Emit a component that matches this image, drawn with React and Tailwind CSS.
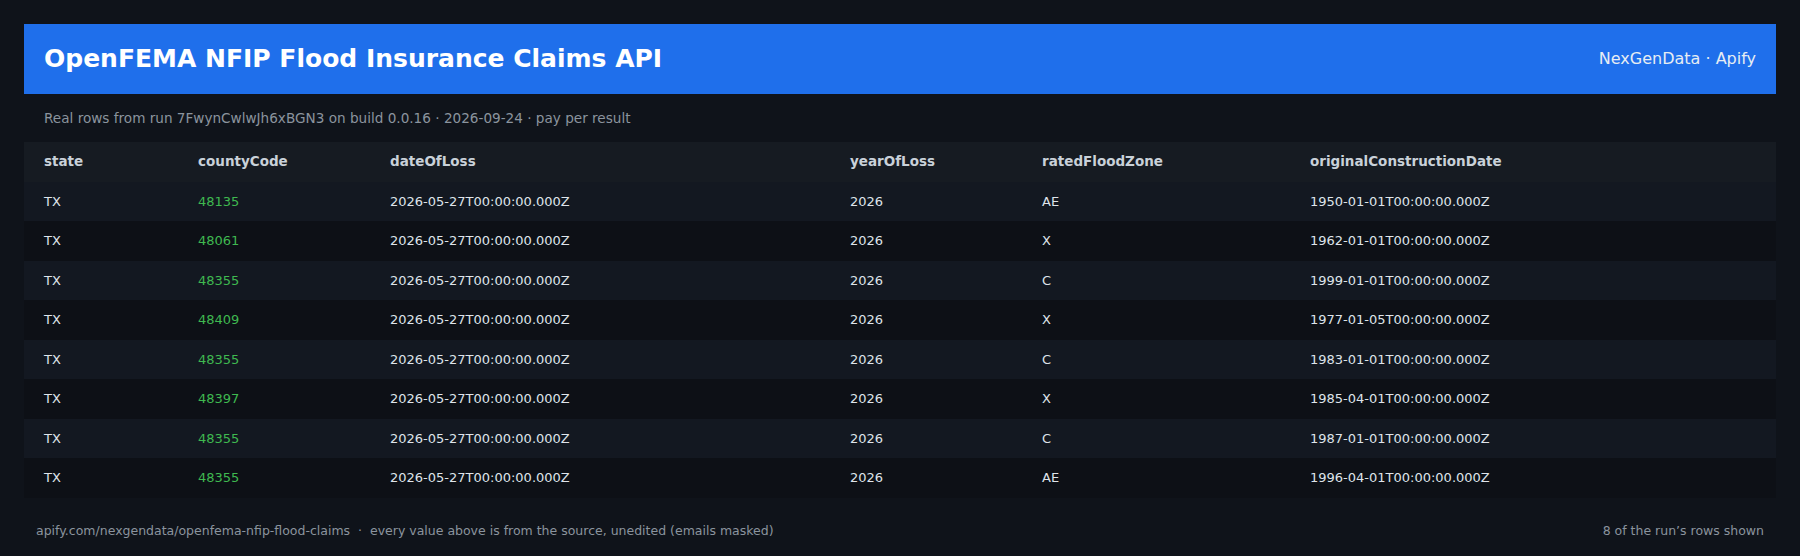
const rows = [
  { state: 'TX', countyCode: '48135', dateOfLoss: '2026-05-27T00:00:00.000Z', yearOfLoss: '2026', zone: 'AE', built: '1950-01-01T00:00:00.000Z' },
  { state: 'TX', countyCode: '48061', dateOfLoss: '2026-05-27T00:00:00.000Z', yearOfLoss: '2026', zone: 'X', built: '1962-01-01T00:00:00.000Z' },
  { state: 'TX', countyCode: '48355', dateOfLoss: '2026-05-27T00:00:00.000Z', yearOfLoss: '2026', zone: 'C', built: '1999-01-01T00:00:00.000Z' },
  { state: 'TX', countyCode: '48409', dateOfLoss: '2026-05-27T00:00:00.000Z', yearOfLoss: '2026', zone: 'X', built: '1977-01-05T00:00:00.000Z' },
  { state: 'TX', countyCode: '48355', dateOfLoss: '2026-05-27T00:00:00.000Z', yearOfLoss: '2026', zone: 'C', built: '1983-01-01T00:00:00.000Z' },
  { state: 'TX', countyCode: '48397', dateOfLoss: '2026-05-27T00:00:00.000Z', yearOfLoss: '2026', zone: 'X', built: '1985-04-01T00:00:00.000Z' },
  { state: 'TX', countyCode: '48355', dateOfLoss: '2026-05-27T00:00:00.000Z', yearOfLoss: '2026', zone: 'C', built: '1987-01-01T00:00:00.000Z' },
  { state: 'TX', countyCode: '48355', dateOfLoss: '2026-05-27T00:00:00.000Z', yearOfLoss: '2026', zone: 'AE', built: '1996-04-01T00:00:00.000Z' },
];

export default function App() {
  return (
    <div className="min-h-[556px] w-[1800px] bg-[#0f131a] p-6 font-['DejaVu_Sans',sans-serif]">
      <header className="flex h-[70px] items-center justify-between bg-[#1f6feb] px-5">
        <h1 className="text-[25px] font-bold text-white">OpenFEMA NFIP Flood Insurance Claims API</h1>
        <span className="text-[16px] text-[#e6edf3]">NexGenData · Apify</span>
      </header>

      <p className="px-5 py-[16px] text-[13.6px] leading-[16px] text-[#8b949e]">
        Real rows from run 7FwynCwlwJh6xBGN3 on build 0.0.16 · 2026-09-24 · pay per result
      </p>

      <table className="w-full table-fixed border-collapse text-left text-[13px] leading-[15.5px]">
        <thead>
          <tr className="bg-[#161b22] text-[13.5px] text-[#c9d1d9]">
            <th className="w-[154px] px-5 py-3 font-bold">state</th>
            <th className="w-[192px] px-5 py-3 font-bold">countyCode</th>
            <th className="w-[460px] px-5 py-3 font-bold">dateOfLoss</th>
            <th className="w-[192px] px-5 py-3 font-bold">yearOfLoss</th>
            <th className="w-[268px] px-5 py-3 font-bold">ratedFloodZone</th>
            <th className="px-5 py-3 font-bold">originalConstructionDate</th>
          </tr>
        </thead>
        <tbody className="text-[#dfe4ea]">
          {rows.map((r, i) => (
            <tr key={i} className={i % 2 === 0 ? 'bg-[#131821]' : 'bg-[#0d1016]'}>
              <td className="px-5 py-3">{r.state}</td>
              <td className="px-5 py-3 text-[#3fb950]">{r.countyCode}</td>
              <td className="px-5 py-3">{r.dateOfLoss}</td>
              <td className="px-5 py-3">{r.yearOfLoss}</td>
              <td className="px-5 py-3">{r.zone}</td>
              <td className="px-5 py-3">{r.built}</td>
            </tr>
          ))}
        </tbody>
      </table>

      <footer className="flex items-center justify-between px-3 pt-[24px] text-[12.5px] text-[#8b949e]">
        <span className="whitespace-pre">apify.com/nexgendata/openfema-nfip-flood-claims  ·  every value above is from the source, unedited (emails masked)</span>
        <span>8 of the run’s rows shown</span>
      </footer>
    </div>
  );
}
